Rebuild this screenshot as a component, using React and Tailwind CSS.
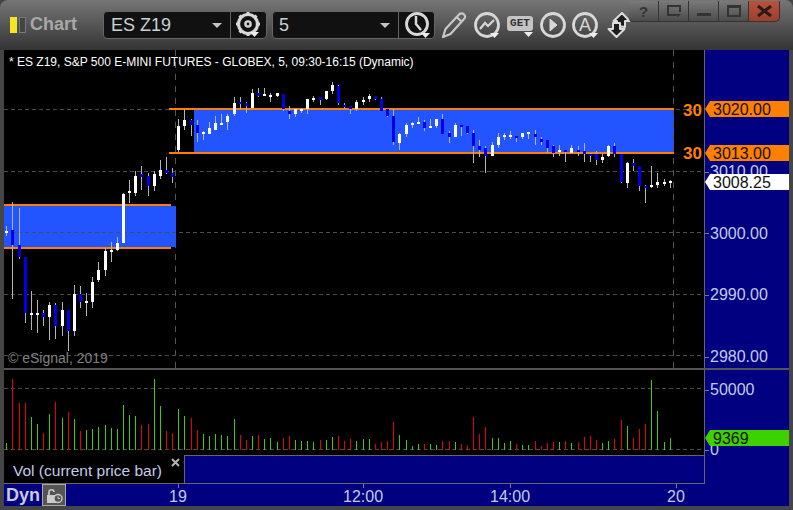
import React from 'react';

// [x, wick top, wick bottom, body top, body bottom, kind]
const candles = [
  [6, 226, 236, 231, 233, 'w'], [12, 202, 299, 230, 245, 'b'], [19, 208, 259, 245, 257, 'b'], [25, 257, 323, 257, 313, 'b'],
  [31, 291, 330, 313, 315, 'w'], [37, 300, 333, 313, 315, 'w'], [43, 310, 326, 313, 317, 'b'], [49, 302, 340, 305, 317, 'w'],
  [55, 303, 339, 305, 326, 'b'], [62, 302, 336, 310, 326, 'w'], [68, 310, 351, 310, 331, 'b'], [74, 285, 336, 294, 331, 'w'],
  [80, 286, 308, 294, 302, 'b'], [86, 293, 316, 301, 303, 'w'], [92, 277, 308, 282, 302, 'w'], [98, 262, 282, 270, 280, 'w'],
  [105, 248, 276, 251, 270, 'w'], [111, 242, 262, 250, 252, 'w'], [117, 237, 251, 243, 250, 'w'], [123, 193, 243, 194, 243, 'w'],
  [129, 180, 203, 191, 193, 'w'], [135, 171, 196, 176, 193, 'w'], [141, 166, 190, 174, 177, 'b'], [148, 173, 196, 176, 186, 'b'],
  [154, 171, 191, 174, 186, 'w'], [160, 160, 179, 170, 176, 'w'], [166, 157, 174, 170, 173, 'b'], [172, 168, 183, 173, 177, 'b'],
  [178, 119, 152, 126, 150, 'w'], [184, 109, 130, 120, 126, 'w'], [191, 119, 136, 120, 125, 'b'], [197, 120, 142, 125, 133, 'b'],
  [203, 131, 140, 132, 134, 'w'], [209, 122, 134, 128, 134, 'w'], [215, 116, 130, 123, 130, 'w'], [221, 114, 125, 123, 125, 'w'],
  [227, 114, 130, 116, 122, 'w'], [234, 97, 116, 103, 114, 'w'], [240, 97, 109, 102, 104, 'b'], [246, 102, 113, 103, 106, 'b'],
  [252, 89, 108, 93, 108, 'w'], [258, 88, 97, 93, 96, 'b'], [264, 88, 96, 94, 96, 'w'], [270, 93, 102, 95, 97, 'w'],
  [277, 93, 97, 93, 96, 'w'], [283, 94, 111, 94, 109, 'b'], [289, 106, 119, 111, 114, 'b'], [295, 109, 117, 109, 114, 'w'],
  [301, 108, 113, 109, 111, 'w'], [307, 99, 114, 99, 109, 'w'], [313, 96, 102, 98, 100, 'w'], [320, 97, 105, 97, 100, 'b'],
  [326, 91, 100, 91, 99, 'w'], [332, 82, 94, 85, 91, 'w'], [338, 85, 105, 86, 103, 'b'], [344, 103, 108, 105, 107, 'b'],
  [350, 106, 114, 106, 109, 'b'], [356, 100, 111, 102, 109, 'w'], [363, 97, 105, 100, 102, 'w'], [369, 94, 102, 96, 99, 'w'],
  [375, 96, 100, 96, 99, 'b'], [381, 97, 111, 99, 111, 'b'], [387, 109, 117, 109, 116, 'b'], [393, 109, 145, 116, 142, 'b'],
  [399, 133, 150, 134, 143, 'w'], [406, 123, 137, 125, 134, 'w'], [412, 122, 128, 123, 125, 'w'], [418, 117, 124, 122, 124, 'w'],
  [424, 120, 131, 122, 128, 'b'], [430, 119, 128, 126, 128, 'w'], [436, 119, 128, 119, 126, 'w'], [442, 114, 134, 119, 134, 'b'],
  [449, 131, 143, 133, 137, 'b'], [455, 123, 137, 125, 137, 'w'], [461, 125, 136, 125, 127, 'b'], [467, 126, 134, 126, 133, 'b'],
  [473, 130, 163, 133, 146, 'b'], [479, 140, 157, 146, 150, 'b'], [485, 146, 173, 148, 156, 'b'], [492, 142, 156, 145, 156, 'w'],
  [498, 133, 148, 137, 145, 'w'], [504, 133, 140, 135, 137, 'w'], [510, 131, 139, 135, 137, 'w'], [516, 136, 142, 136, 138, 'b'],
  [522, 133, 139, 133, 137, 'w'], [528, 132, 139, 132, 134, 'w'], [535, 130, 145, 134, 137, 'b'], [541, 137, 145, 139, 142, 'b'],
  [547, 140, 153, 140, 148, 'b'], [553, 145, 157, 146, 153, 'b'], [559, 145, 156, 150, 152, 'w'], [565, 150, 162, 150, 152, 'b'],
  [571, 145, 153, 148, 153, 'w'], [578, 146, 156, 150, 152, 'b'], [584, 143, 162, 151, 154, 'b'], [590, 153, 162, 154, 156, 'b'],
  [596, 151, 165, 154, 160, 'b'], [602, 154, 163, 157, 160, 'w'], [608, 145, 157, 146, 156, 'w'], [614, 143, 157, 146, 154, 'b'],
  [621, 154, 183, 154, 182, 'b'], [627, 162, 188, 163, 183, 'w'], [633, 159, 171, 163, 166, 'b'], [639, 166, 191, 166, 186, 'b'],
  [645, 185, 203, 186, 188, 'b'], [651, 166, 188, 185, 187, 'w'], [657, 173, 188, 182, 185, 'w'], [664, 179, 186, 182, 184, 'w'],
  [670, 180, 188, 181, 183, 'w'],
];

// [x, top of bar, colour] - every bar runs down to the pane baseline
const volumes = [
  [6, 443, 'g'], [12, 379, 'r'], [19, 403, 'r'], [25, 403, 'r'], [31, 417, 'g'], [37, 424, 'g'], [43, 433, 'r'], [49, 414, 'g'],
  [55, 402, 'r'], [62, 418, 'g'], [68, 412, 'r'], [74, 419, 'g'], [80, 431, 'r'], [86, 430, 'g'], [92, 429, 'g'], [98, 427, 'g'],
  [105, 425, 'g'], [111, 428, 'g'], [117, 429, 'g'], [123, 405, 'g'], [129, 415, 'g'], [135, 416, 'g'], [141, 425, 'r'], [148, 424, 'r'],
  [154, 379, 'g'], [160, 406, 'g'], [166, 431, 'r'], [172, 433, 'r'], [178, 409, 'g'], [184, 416, 'g'], [191, 418, 'r'], [197, 430, 'r'],
  [203, 434, 'g'], [209, 436, 'g'], [215, 434, 'g'], [221, 435, 'g'], [227, 436, 'g'], [234, 419, 'g'], [240, 435, 'r'], [246, 440, 'r'],
  [252, 436, 'g'], [258, 435, 'r'], [264, 439, 'g'], [270, 438, 'g'], [277, 442, 'g'], [283, 438, 'r'], [289, 436, 'r'], [295, 440, 'g'],
  [301, 441, 'g'], [307, 441, 'g'], [313, 442, 'g'], [320, 440, 'r'], [326, 440, 'g'], [332, 437, 'g'], [338, 436, 'r'], [344, 441, 'r'],
  [350, 439, 'r'], [356, 441, 'g'], [363, 439, 'g'], [369, 439, 'g'], [375, 444, 'r'], [381, 442, 'r'], [387, 441, 'r'], [393, 422, 'r'],
  [399, 435, 'g'], [406, 440, 'g'], [412, 446, 'g'], [418, 444, 'g'], [424, 444, 'r'], [430, 444, 'g'], [436, 445, 'g'], [442, 441, 'r'],
  [449, 441, 'r'], [455, 442, 'g'], [461, 444, 'r'], [467, 445, 'r'], [473, 417, 'r'], [479, 434, 'r'], [485, 427, 'r'], [492, 438, 'g'],
  [498, 438, 'g'], [504, 443, 'g'], [510, 441, 'g'], [516, 444, 'r'], [522, 445, 'g'], [528, 445, 'g'], [535, 441, 'r'], [541, 446, 'r'],
  [547, 443, 'r'], [553, 442, 'r'], [559, 442, 'g'], [565, 441, 'r'], [571, 443, 'g'], [578, 442, 'r'], [584, 437, 'r'], [590, 436, 'r'],
  [596, 440, 'r'], [602, 443, 'g'], [608, 441, 'g'], [614, 439, 'r'], [621, 420, 'r'], [627, 426, 'g'], [633, 438, 'r'], [639, 429, 'r'],
  [645, 424, 'r'], [651, 380, 'g'], [657, 411, 'g'], [664, 442, 'g'], [670, 438, 'g'],
];

const gridRows = [109, 171, 232, 294, 355];

function PriceChart() {
  return (
    <svg className="block" width="700" height="318" viewBox="4 50 700 318" shapeRendering="crispEdges">
      <path d="M175.5 50V368" stroke="#555" strokeDasharray="6 6" />
      <rect x="4" y="206" width="172" height="41" fill="#2255ff" />
      <rect x="194" y="110" width="480" height="42" fill="#2255ff" />
      <path d="M673.5 50V368" stroke="#555" strokeDasharray="6 6" />
      {gridRows.map((y) => (
        <path key={y} d={`M4 ${y}.5H704`} stroke="#4a4a4a" strokeDasharray="4 3" />
      ))}
      <rect x="4" y="204" width="167" height="2" fill="#ff8000" />
      <rect x="4" y="247" width="167" height="2" fill="#ff8000" />
      <rect x="169" y="108" width="505" height="2" fill="#ff8000" />
      <rect x="169" y="152" width="505" height="2" fill="#ff8000" />
      {candles.map(([x, hi, lo, top, bottom, kind]) => (
        <g key={x}>
          <rect x={x} y={hi} width="1" height={lo - hi} fill="#b4b4b4" />
          <rect x={x - 1} y={top} width="3" height={bottom - top} fill={kind === 'w' ? '#ffffff' : '#0000e6'} />
        </g>
      ))}
    </svg>
  );
}

function VolumeChart() {
  return (
    <svg className="block" width="700" height="85" viewBox="4 370 700 85" shapeRendering="crispEdges">
      <path d="M4 388.5H704" stroke="#4a4a4a" strokeDasharray="4 3" />
      <path d="M4 449.5H704" stroke="#4a4a4a" strokeDasharray="4 3" />
      {volumes.map(([x, top, color]) => (
        <rect key={x} x={x} y={top} width="1" height={450 - top} fill={color === 'g' ? '#44cc00' : '#e60000'} />
      ))}
    </svg>
  );
}

function Caret({ x, y }) {
  return <path d={`M${x} ${y}h9l-4.5 5z`} fill="#eee" stroke="none" />;
}

function GearIcon() {
  return (
    <svg width="30" height="28" viewBox="0 0 30 28" fill="none" stroke="#d8d8d8">
      <circle cx="15" cy="13" r="9.5" strokeWidth="3.2" />
      <circle cx="15" cy="13" r="2.6" strokeWidth="2.4" />
      <path d="M15 1v3M15 22v3M3 13h3M24 13h3M6.5 4.5l2 2M23.5 4.5l-2 2M6.5 21.5l2-2" strokeWidth="3" />
      <Caret x={17} y={21} />
    </svg>
  );
}

function ClockIcon() {
  return (
    <svg width="30" height="28" viewBox="0 0 30 28" fill="none" stroke="#d8d8d8">
      <circle cx="14" cy="13" r="10.5" strokeWidth="2.8" />
      <path d="M13 5v8l5 6" strokeWidth="2.5" />
      <Caret x={18} y={22} />
    </svg>
  );
}

function PencilIcon() {
  return (
    <svg width="26" height="28" viewBox="0 0 26 28" fill="none" stroke="#c8c8c8" strokeWidth="2.2" strokeLinejoin="round">
      <path d="M2 26l2.5-8L18 3.5c1.5-1.5 3.5-1.5 5 0s1.5 3 0 4.5L9.5 23z" />
      <path d="M15.5 6l5.5 5" />
    </svg>
  );
}

function TrendIcon() {
  return (
    <svg width="30" height="28" viewBox="0 0 30 28" fill="none" stroke="#d8d8d8">
      <circle cx="14" cy="14" r="11.5" strokeWidth="2.8" />
      <path d="M7 18l5-6 3 3 6-6" strokeWidth="2.2" />
      <Caret x={17} y={22} />
    </svg>
  );
}

function GetIcon() {
  return (
    <div className="relative w-[30px] h-[28px]">
      <span className="absolute left-0 top-[5px] w-[26px] h-[15px] rounded-[3px] bg-[#c4c4c4] text-[#333] text-[11px] leading-[15px] font-bold text-center font-['Liberation_Mono',monospace]">GET</span>
      <svg className="absolute left-0 top-0" width="30" height="28" viewBox="0 0 30 28">
        <Caret x={17} y={21} />
      </svg>
    </div>
  );
}

function PlayIcon() {
  return (
    <svg width="28" height="28" viewBox="0 0 28 28" fill="none" stroke="#d8d8d8">
      <circle cx="14" cy="14" r="11.5" strokeWidth="2.8" />
      <path d="M11 8l7 6-7 6z" fill="#d8d8d8" strokeWidth="1" />
    </svg>
  );
}

function TextToolIcon() {
  return (
    <div className="relative w-[30px] h-[28px]">
      <svg className="absolute left-0 top-0" width="30" height="28" viewBox="0 0 30 28" fill="none" stroke="#d8d8d8">
        <circle cx="14" cy="14" r="11.5" strokeWidth="2.8" />
        <Caret x={18} y={22} />
      </svg>
      <span className="absolute left-0 top-[5px] w-[28px] text-center text-[#d8d8d8] text-[18px] leading-[18px]">A</span>
    </div>
  );
}

function ArrowsIcon() {
  return (
    <svg width="24" height="28" viewBox="0 0 24 28" stroke="#dcdcdc" strokeWidth="2" strokeLinejoin="round" fill="#1c1c1c">
      <path d="M10 15v-5H6.500L15 2l7.500 8H18v6z" />
      <path d="M6 12v6H1.500l8 8 8-8H13v-6z" />
    </svg>
  );
}

function WindowButton({ children, className }) {
  return (
    <div className={`h-[21px] flex items-center justify-center border-r border-b border-[#333] ${className}`}>
      {children}
    </div>
  );
}

function WindowButtons() {
  const grey = 'w-[30px] bg-gradient-to-b from-[#7a7a7a] to-[#4c4c4c]';
  return (
    <div className="flex ml-[-2px] mt-[1px]">
      <WindowButton className={`${grey} rounded-bl-[4px]`}>
        <span className="text-[#333] text-[15px] leading-none font-bold">?</span>
      </WindowButton>
      <WindowButton className={grey}>
        <svg width="16" height="14" viewBox="0 0 16 14" fill="none" stroke="#333" strokeWidth="2">
          <path d="M10 11H2V2h12v6" />
          <path d="M9 10h6l-3 3z" fill="#333" stroke="none" />
        </svg>
      </WindowButton>
      <WindowButton className={grey}>
        <div className="w-[14px] h-[3px] mt-[6px] bg-[#333]" />
      </WindowButton>
      <WindowButton className={grey}>
        <div className="w-[14px] h-[12px] border-2 border-t-[3px] border-[#333]" />
      </WindowButton>
      <WindowButton className="w-[31px] bg-gradient-to-b from-[#b8523c] to-[#9c3f2e] rounded-br-[5px]">
        <svg width="15" height="12" viewBox="0 0 15 12" stroke="#2a1a14" strokeWidth="3">
          <path d="M1 1l13 10M14 1L1 11" />
        </svg>
      </WindowButton>
    </div>
  );
}

function ComboCaret() {
  return <div className="w-0 h-0 border-x-[5px] border-x-transparent border-t-[5px] border-t-[#c4c4c4]" />;
}

function Header() {
  return (
    <div className="h-[50px] flex items-start rounded-t-[8px] bg-gradient-to-b from-[#767676] via-[#555555] to-[#343434]">
      <div className="ml-[10px] mt-[17px] w-[7px] h-[16px] bg-[#f5e625]" />
      <div className="ml-[2px] mt-[17px] w-[7px] h-[16px] bg-[#444] border border-[#777]" />
      <div className="ml-[4px] mt-[14px] text-[18px] leading-[21px] font-bold text-[#a8a8a8]">Chart</div>

      <div className="ml-[26px] mt-[11px] w-[164px] h-[28px] flex items-center bg-[#111] border border-[#666] rounded-[4px]">
        <span className="ml-[7px] w-[101px] text-[18px] leading-[21px] text-[#c8d0d8]">ES Z19</span>
        <ComboCaret />
        <div className="ml-[8px] w-px h-full bg-[#666]" />
        <div className="ml-[2px]"><GearIcon /></div>
      </div>

      <div className="ml-[5px] mt-[11px] w-[163px] h-[28px] flex items-center bg-[#111] border border-[#666] rounded-[4px]">
        <span className="ml-[6px] w-[101px] text-[18px] leading-[21px] text-[#c8d0d8]">5</span>
        <ComboCaret />
        <div className="ml-[8px] w-px h-full bg-[#666]" />
        <div className="ml-[4px]"><ClockIcon /></div>
      </div>

      <div className="ml-[6px] mt-[11px]"><PencilIcon /></div>
      <div className="ml-[6px] mt-[11px]"><TrendIcon /></div>
      <div className="mt-[11px] ml-[4px]"><GetIcon /></div>
      <div className="mt-[11px] ml-[2px]"><PlayIcon /></div>
      <div className="mt-[11px] ml-[4px]"><TextToolIcon /></div>
      <div className="mt-[11px] ml-[6px]"><ArrowsIcon /></div>
      <WindowButtons />
    </div>
  );
}

function AxisLabel({ children, className }) {
  return (
    <div className={`h-[20px] flex items-center ${className}`}>
      <div className="w-[4px] h-px bg-[#777]" />
      <span className="ml-[1px] text-[16px] leading-[20px] text-[#c4cbe8]">{children}</span>
    </div>
  );
}

function PriceTag({ children, className }) {
  return (
    <div className={`absolute left-0 right-0 h-[16px] pl-[8px] pt-[2px] flex items-center text-[16px] text-[#111] [clip-path:polygon(5px_0,100%_0,100%_100%,5px_100%,0_50%)] ${className}`}>
      {children}
    </div>
  );
}

function TimeTick({ label, className }) {
  return (
    <div className={`w-[40px] flex flex-col items-center ${className}`}>
      <div className="w-px h-[4px] bg-[#777]" />
      <span className="text-[16px] leading-[18px] text-[#c4cbe8]">{label}</span>
    </div>
  );
}

export default function App() {
  return (
    <div className="w-[793px] h-[510px] flex flex-col bg-[#454545] overflow-hidden font-['Liberation_Sans',Arial,sans-serif]">
      <Header />

      <div className="flex-1 flex flex-col px-[4px] pb-[4px]">
        {/* price pane */}
        <div className="h-[318px] flex bg-[#000080]">
          <div className="relative w-[701px] border-r border-[#666] bg-black overflow-hidden">
            <PriceChart />
            <div className="absolute left-[5px] top-[5px] text-[12px] leading-[14px] text-white whitespace-nowrap">
              * ES Z19, S&amp;P 500 E-MINI FUTURES - GLOBEX, 5, 09:30-16:15 (Dynamic)
            </div>
            <div className="absolute left-[4px] top-[299px] text-[14px] leading-[18px] text-[#808080] whitespace-nowrap">
              © eSignal, 2019
            </div>
            <div className="absolute left-[679px] top-[51px] text-[17px] leading-[20px] font-bold text-[#ff8000]">30</div>
            <div className="absolute left-[679px] top-[94px] text-[17px] leading-[20px] font-bold text-[#ff8000]">30</div>
          </div>
          <div className="relative flex-1 pt-[112px]">
            <AxisLabel className="mb-[41.7px]">3010.00</AxisLabel>
            <AxisLabel className="mb-[41.7px]">3000.00</AxisLabel>
            <AxisLabel className="mb-[41.7px]">2990.00</AxisLabel>
            <AxisLabel>2980.00</AxisLabel>
            <PriceTag className="top-[51px] bg-[#ff8000]">3020.00</PriceTag>
            <PriceTag className="top-[95px] bg-[#ff8000]">3013.00</PriceTag>
            <PriceTag className="top-[124px] bg-white">3008.25</PriceTag>
          </div>
        </div>

        <div className="h-[2px] bg-[#555]" />

        {/* volume pane with its legend */}
        <div className="h-[114px] flex bg-[#000080]">
          <div className="w-[701px] flex flex-col border-r border-b border-[#666]">
            <div className="bg-black">
              <VolumeChart />
            </div>
            <div className="flex-1 flex">
              <div className="relative w-[180px] bg-black">
                <span className="absolute left-[9px] top-[6px] text-[15.5px] leading-[20px] text-[#c4cbe8] whitespace-nowrap">Vol (current price bar)</span>
                <svg className="absolute left-[167px] top-[3px]" width="9" height="9" viewBox="0 0 9 9" stroke="#b4b4b4" strokeWidth="2">
                  <path d="M1 1l7 7M8 1L1 8" />
                </svg>
              </div>
              <div className="flex-1 border-l border-t border-[#666]" />
            </div>
          </div>
          <div className="relative flex-1 pt-[10px]">
            <AxisLabel className="mb-[40px]">50000</AxisLabel>
            <AxisLabel>0</AxisLabel>
            <PriceTag className="top-[60px] bg-[#3fd000]">9369</PriceTag>
          </div>
        </div>

        {/* time axis */}
        <div className="flex-1 flex bg-[#000080]">
          <span className="ml-[2px] mt-[1px] text-[18px] leading-[21px] font-bold text-[#c8cbd8]">Dyn</span>
          <div className="ml-[2px] w-[24px] h-[22px] flex items-center justify-center bg-[#555] border border-[#aaa]">
            <svg width="17" height="17" viewBox="0 0 17 17" fill="none" stroke="#ccc">
              <path d="M3 8V5c0-3 5-3 5 0" strokeWidth="1.6" />
              <rect x="1" y="8" width="9" height="8" fill="#ccc" stroke="none" />
              <circle cx="12" cy="11.5" r="4" fill="#555" strokeWidth="1.4" />
              <path d="M12 9.5v2h2" strokeWidth="1" />
            </svg>
          </div>
          <TimeTick label="19" className="ml-[92px]" />
          <TimeTick label="12:00" className="ml-[145px]" />
          <TimeTick label="14:00" className="ml-[107px]" />
          <TimeTick label="20" className="ml-[126px]" />
        </div>
      </div>
    </div>
  );
}
